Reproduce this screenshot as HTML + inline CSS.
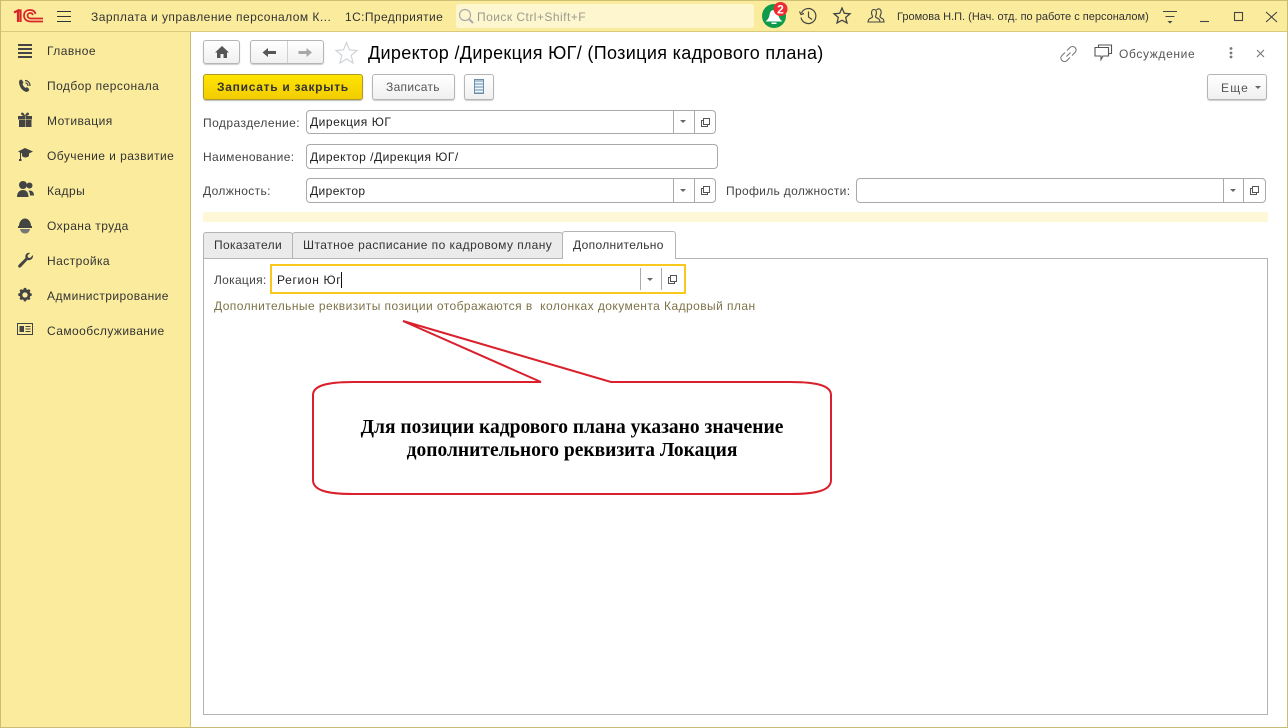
<!DOCTYPE html>
<html lang="ru"><head><meta charset="utf-8"><title>Директор</title>
<style>
html,body{margin:0;padding:0;background:#fff}
#p{position:relative;width:1288px;height:728px;overflow:hidden;background:#fff;font:12px/14px "Liberation Sans",sans-serif;color:#333}
#p div{position:absolute;box-sizing:border-box}
.t{white-space:pre;letter-spacing:.3px}
.n{color:#333;font-size:12px;letter-spacing:.44px}
.f{border:1px solid #a9a9a9;border-radius:4px;background:#fff}
.b{border:1px solid #b5b5b5;border-radius:3px;background:linear-gradient(#fff,#f0f0f0);box-shadow:0 1px 1px #ccc}
svg{position:absolute;overflow:visible}
</style></head><body><div id="p">
<div style="left:0;top:0;width:1288px;height:32px;background:#fbec9d;border-top:1px solid #cdbf73;border-bottom:1px solid #d8ca7a"></div>
<div style="left:0;top:32px;width:191px;height:696px;background:#fbec9d;border-right:1px solid #c9bc75"></div>
<div style="left:0;top:0;width:1px;height:728px;background:#c9bc75"></div>
<div style="right:0;top:0;width:1px;height:728px;background:#c9bc75"></div>
<div style="left:0;top:727px;width:1288px;height:1px;background:#c9bc75"></div>

<svg style="left:0;top:0" width="100" height="32" fill="none">
<path d="M14 12.500L18 10.500V22M18 10.500H20.500V22" stroke="#d8242b" stroke-width="2.200"/>
<path d="M43 21.500H31C26.500 21.500 24 19 24 15.500C24 12 26.500 10 30 10C33 10 35 11.500 35.500 14" stroke="#d8242b" stroke-width="1.700"/>
<path d="M43 18.500H31C29 18.500 27.500 17.500 27.500 15.500C27.500 14 29 13 30.500 13C32 13 32.500 14 33 15" stroke="#d8242b" stroke-width="1.700"/>
<path d="M57 11.500H71M57 16.500H71M57 21.500H71" stroke="#333" stroke-width="1"/>
</svg>
<div class="t" style="left:91px;top:10px;letter-spacing:.46px;color:#333">Зарплата и управление персоналом К...</div>
<div class="t" style="left:345px;top:10px;letter-spacing:.4px;color:#333">1С:Предприятие</div>

<div style="left:456px;top:4px;width:298px;height:24px;background:#fdf6cf;border-radius:3px"></div>
<svg style="left:458px;top:8px" width="18" height="18" fill="none"><circle cx="7" cy="7" r="5.500" stroke="#aaa" stroke-width="1.200"/><path d="M11 11L15 15" stroke="#aaa" stroke-width="2"/></svg>
<div class="t" style="left:477px;top:10px;color:#9b9b8c;letter-spacing:.47px">Поиск Ctrl+Shift+F</div>

<svg style="left:761px;top:2px" width="30" height="28">
<circle cx="13" cy="14" r="12" fill="#0d9a4a"/>
<path d="M13 8C10 8 9 10 8.500 13C8 16 6.500 18 4.500 19.500H21.500C19.500 18 18 16 17.500 13C17 10 16 8 13 8ZM10.500 20.500H15.500V22H10.500Z" fill="#fff"/>
<circle cx="19.500" cy="7" r="7" fill="#ee2b33"/>
<text x="19.500" y="11.500" text-anchor="middle" font-family="Liberation Sans" font-size="12" font-weight="bold" fill="#fff">2</text>
</svg>
<svg style="left:798px;top:6px" width="22" height="22" fill="none" stroke="#444" stroke-width="1.200">
<path d="M3.500 7A7.500 7.500 0 1 1 3 11.500"/><path d="M1.500 5.500L3 8.500L6 7.500"/><path d="M10.500 5.500V11L14 13.500"/></svg>
<svg style="left:833px;top:6px" width="20" height="20" fill="none" stroke="#444" stroke-width="1.300">
<path d="M9 2L11.300 7.300L17 7.800L12.700 11.500L14 17L9 14.200L4 17L5.300 11.500L1 7.800L6.700 7.300Z"/></svg>
<svg style="left:867px;top:7px" width="20" height="18" fill="none" stroke="#444" stroke-width="1.100">
<path d="M1 15C1 12 3 11.500 5 10.500C5.800 10 5.500 9 5 8C4 6 4.500 2.500 7 2.500C9.500 2.500 10 6 9 8C8.500 9 8.200 10 9 10.500C11 11.500 13 12 13 15Z"/>
<path d="M9.500 3C10.300 2 11.500 1.500 12.500 2C14.500 2.800 14.500 6 13.500 8C13 9 12.800 10 13.500 10.500C15.500 11.500 17 12 17 15H13"/></svg>
<div class="t" style="left:897px;top:10px;font-size:11px;letter-spacing:0;color:#333">Громова Н.П. (Нач. отд. по работе с персоналом)</div>
<svg style="left:1160px;top:8px" width="120" height="18" fill="none" stroke="#444" stroke-width="1.100">
<path d="M3 3.500H17M5.500 8.500H14.500"/><path d="M7.500 13H12.500L10 15.500Z" fill="#444" stroke="none"/>
<path d="M40 13.500H49"/><rect x="74.500" y="4.500" width="8" height="8"/><path d="M117 4L106 14M106 4L117 14"/>
</svg>

<svg style="left:16px;top:42px" width="20" height="300" fill="#444">
<path d="M2 2h14v2H2zM2 6h14v2H2zM2 10h14v2H2zM2 14h14v2H2z"/>
<g transform="translate(0 2)">
<path d="M3 38C3 36 5 35 6 36L7.500 38.500L6.500 40C7 41.500 8 43 9.500 44L11 43L13 45C13.500 46 13 47 11 48C6 47.500 3 42 3 38Z"/>
<path d="M9 36.500C12 36.500 14 39 14 42M9.500 39C11 39 12 40.500 12 42" fill="none" stroke="#444" stroke-width="1.200"/>
</g>
<path d="M2 74h7v3.500H2zM9.500 74h6.500v3.500H9.500zM3 78h6v7H3zM9.500 78h6v7h-6zM5 71.500c1-2 3-1 4 2.500c1-3.500 3-4.500 4-2.500c.5 1.500-2 2.500-4 2.500c-2 0-4-1-4-2.500z"/>
<g transform="translate(0 2)"><path d="M9 104L2 107.500L4 108.500V115H3V117H5.500V115H5V109L6 109.500V112C8 114 11 114 13 112V109.500L17 107.500Z"/></g>
<circle cx="7" cy="143" r="4"/><circle cx="13.500" cy="143.500" r="3"/><path d="M1 155C1 150 4 148 7 148C10 148 12.500 150 12.500 155ZM13.500 148.500C16 148.500 18 150 18 153.500H14C14 151.500 13.500 150 12.500 149Z"/>
<path d="M3 184A6 7.500 0 0 1 15 184H16V186H2V184Z"/><path d="M4 187H14C13.500 190 11.500 191.500 9 191.500C6.500 191.500 4.500 190 4 187Z" fill="#777"/>
<path d="M17 213C17.500 216 15 219 11.500 218L5 225C3 226.500 1.500 225 2.500 223L9.500 216C8.500 212.500 11.500 210 14 211L11.500 213.500L12 215.500L14 216Z"/>
<path transform="translate(9 253) scale(.75) translate(-9.500 -254.500)" fill-rule="evenodd" d="M8 245h3l.500 2 1.500.7 1.800-1 2 2-1 1.800.7 1.500 2 .5v3l-2 .5-.7 1.500 1 1.800-2 2-1.800-1-1.500.7-.5 2H8l-.5-2-1.500-.7-1.800 1-2-2 1-1.800-.7-1.500-2-.5v-3l2-.5.7-1.500-1-1.800 2-2 1.800 1 1.500-.7zM9.500 251a3.500 3.500 0 1 0 .01 0z"/>
<path fill-rule="evenodd" d="M1 281h16v12H1zM2 282v10h14v-10z"/><path d="M3.500 284h4.500v6H3.500zM9.500 284h5v1h-5zM9.500 286.500h5v1h-5zM9.500 289h5v1h-5z"/>
</svg>
<div class="t n" style="left:47px;top:44px">Главное</div>
<div class="t n" style="left:47px;top:79px">Подбор персонала</div>
<div class="t n" style="left:47px;top:114px">Мотивация</div>
<div class="t n" style="left:47px;top:149px">Обучение и развитие</div>
<div class="t n" style="left:47px;top:184px">Кадры</div>
<div class="t n" style="left:47px;top:219px">Охрана труда</div>
<div class="t n" style="left:47px;top:254px">Настройка</div>
<div class="t n" style="left:47px;top:289px">Администрирование</div>
<div class="t n" style="left:47px;top:324px">Самообслуживание</div>

<div class="b" style="left:203px;top:40px;width:37px;height:24px"></div>
<svg style="left:214px;top:45px" width="16" height="14" fill="#555"><path d="M8 1L1 7.500H3V13H6.500V9H9.500V13H13V7.500H15Z"/></svg>
<div class="b" style="left:250px;top:40px;width:74px;height:24px"></div>
<div style="left:287px;top:41px;width:1px;height:22px;background:#d0d0d0"></div>
<svg style="left:261px;top:47px" width="56" height="12"><path d="M1.500 5L7 0.500V3.500H15V6.500H7V9.500Z" fill="#555" transform="translate(0 .5)"/><path d="M51 5L45.500 0.500V3.500H37.500V6.500H45.500V9.500Z" fill="#a8a8a8" transform="translate(0 .5)"/></svg>
<svg style="left:334px;top:41px" width="26" height="24" fill="#fff" stroke="#cfd3d6" stroke-width="1.200"><path d="M12.500 1.500L15.500 8.800L23 9.500L17.200 14.400L19 22L12.500 18L6 22L7.800 14.400L2 9.500L9.500 8.800Z"/></svg>
<div class="t" style="left:368px;top:43px;font-size:18px;line-height:20px;color:#000;letter-spacing:.34px">Директор /Дирекция ЮГ/ (Позиция кадрового плана)</div>

<svg style="left:1060px;top:45px" width="18" height="18" fill="none" stroke="#777" stroke-width="1.100"><path d="M7 5.500L10 2.500C11.500 1 13.500 1 15 2.500C16.500 4 16.500 6 15 7.500L12 10.500M10.500 7.500L6.500 11.500M10 12.500L7 15.500C5.500 17 3.500 17 2 15.500C.5 14 .5 12 2 10.500L5 7.500"/></svg>
<svg style="left:1094px;top:44px" width="20" height="18" fill="#fff" stroke="#555" stroke-width="1.100"><path d="M4.500 3V1H17.500V9.500H15"/><path d="M1 3.500H14.500V12H9L7 15.500V12H1Z"/></svg>
<div class="t" style="left:1119px;top:47px;color:#555;letter-spacing:.64px">Обсуждение</div>
<svg style="left:1225px;top:45px" width="40" height="16"><circle cx="6" cy="3.500" r="1.400" fill="#777"/><circle cx="6" cy="8" r="1.400" fill="#777"/><circle cx="6" cy="12" r="1.400" fill="#777"/><path d="M32 5L39 12M39 5L32 12" stroke="#777" stroke-width="1.100"/></svg>

<div style="left:203px;top:74px;width:160px;height:26px;border:1px solid #ae9a22;border-radius:3px;background:linear-gradient(#ffe500,#f2cc00);box-shadow:0 1px 1px #bbb"></div>
<div class="t" style="left:217px;top:80px;font-weight:bold;color:#333;font-size:12px;letter-spacing:.72px">Записать и закрыть</div>
<div class="b" style="left:372px;top:74px;width:83px;height:26px"></div>
<div class="t" style="left:386px;top:80px;color:#555;letter-spacing:.32px">Записать</div>
<div class="b" style="left:464px;top:74px;width:30px;height:26px"></div>
<svg style="left:474px;top:79px" width="10" height="16"><rect x=".5" y=".5" width="9" height="14" fill="#a8c3d8" stroke="#6c8fa9"/><path d="M1 3.500h8M1 6.500h8M1 9.500h8M1 12.500h8" stroke="#f2f6f9"/></svg>
<div class="b" style="left:1207px;top:74px;width:60px;height:26px"></div>
<div class="t" style="left:1221px;top:81px;color:#555;letter-spacing:1.200px">Еще</div>
<svg style="left:1255px;top:86px" width="7" height="4"><path d="M0 0H6L3 3Z" fill="#666"/></svg>

<div class="t" style="left:203px;top:116px;color:#444;letter-spacing:.45px">Подразделение:</div>
<div class="f" style="left:306px;top:110px;width:410px;height:24px"></div>
<div style="left:673px;top:111px;width:1px;height:22px;background:#a9a9a9"></div>
<div style="left:694px;top:111px;width:1px;height:22px;background:#a9a9a9"></div>
<div class="t" style="left:310px;top:115px;color:#222;letter-spacing:.54px">Дирекция ЮГ</div>

<div class="t" style="left:203px;top:150px;color:#444;letter-spacing:.38px">Наименование:</div>
<div class="f" style="left:306px;top:144px;width:412px;height:25px"></div>
<div class="t" style="left:310px;top:150px;color:#222;letter-spacing:.5px">Директор /Дирекция ЮГ/</div>

<div class="t" style="left:203px;top:184px;color:#444;letter-spacing:.38px">Должность:</div>
<div class="f" style="left:306px;top:178px;width:410px;height:25px"></div>
<div style="left:673px;top:179px;width:1px;height:23px;background:#a9a9a9"></div>
<div style="left:694px;top:179px;width:1px;height:23px;background:#a9a9a9"></div>
<div class="t" style="left:310px;top:184px;color:#222;letter-spacing:.4px">Директор</div>

<div class="t" style="left:726px;top:184px;color:#444;letter-spacing:.33px">Профиль должности:</div>
<div class="f" style="left:856px;top:178px;width:410px;height:25px"></div>
<div style="left:1223px;top:179px;width:1px;height:23px;background:#a9a9a9"></div>
<div style="left:1243px;top:179px;width:1px;height:23px;background:#a9a9a9"></div>

<svg style="left:680px;top:120px" width="8" height="4"><path d="M0 0H6L3 3Z" fill="#666"/></svg>
<svg style="left:680px;top:189px" width="8" height="4"><path d="M0 0H6L3 3Z" fill="#666"/></svg>
<svg style="left:1230px;top:189px" width="8" height="4"><path d="M0 0H6L3 3Z" fill="#666"/></svg>
<svg style="left:701px;top:118px" width="9" height="9" fill="#fff" stroke="#555"><path d="M2.500 2.500H.5V8.500H6.500V6.500"/><rect x="2.500" y=".5" width="6" height="6"/></svg>
<svg style="left:701px;top:186px" width="9" height="9" fill="#fff" stroke="#555"><path d="M2.500 2.500H.5V8.500H6.500V6.500"/><rect x="2.500" y=".5" width="6" height="6"/></svg>
<svg style="left:1250px;top:186px" width="9" height="9" fill="#fff" stroke="#555"><path d="M2.500 2.500H.5V8.500H6.500V6.500"/><rect x="2.500" y=".5" width="6" height="6"/></svg>

<div style="left:203px;top:212px;width:1065px;height:10px;background:#fef8d8"></div>

<div style="left:203px;top:258px;width:1065px;height:457px;border:1px solid #b4b4b4;background:#fff"></div>
<div style="left:203px;top:232px;width:90px;height:27px;background:#ebebeb;border:1px solid #b4b4b4;border-radius:3px 3px 0 0"></div>
<div style="left:292px;top:232px;width:271px;height:27px;background:#ebebeb;border:1px solid #b4b4b4;border-radius:3px 3px 0 0"></div>
<div style="left:562px;top:231px;width:114px;height:28px;background:#fff;border:1px solid #b4b4b4;border-bottom:0;border-radius:3px 3px 0 0"></div>
<div class="t" style="left:214px;top:238px;color:#333;letter-spacing:.34px">Показатели</div>
<div class="t" style="left:303px;top:238px;color:#333;letter-spacing:.45px">Штатное расписание по кадровому плану</div>
<div class="t" style="left:573px;top:238px;color:#333;letter-spacing:.34px">Дополнительно</div>

<div class="t" style="left:214px;top:273px;color:#444;letter-spacing:.3px">Локация:</div>
<div style="left:270px;top:264px;width:416px;height:30px;border:2px solid #f8c81c;background:#fff"></div>
<div style="left:640px;top:268px;width:1px;height:22px;background:#aaa"></div>
<div style="left:661px;top:268px;width:1px;height:22px;background:#aaa"></div>
<div class="t" style="left:277px;top:273px;color:#222;letter-spacing:.66px">Регион Юг</div>
<div style="left:341px;top:272px;width:1px;height:16px;background:#111"></div>
<svg style="left:647px;top:278px" width="8" height="4"><path d="M0 0H6L3 3Z" fill="#666"/></svg>
<svg style="left:668px;top:275px" width="9" height="9" fill="#fff" stroke="#555"><path d="M2.500 2.500H.5V8.500H6.500V6.500"/><rect x="2.500" y=".5" width="6" height="6"/></svg>
<div class="t" style="left:214px;top:299px;color:#7d7348;letter-spacing:.435px">Дополнительные реквизиты позиции отображаются в  колонках документа Кадровый план</div>

<svg style="left:300px;top:315px" width="540" height="190" fill="none">
<path d="M241 67L103 6L311 67H490C518 67 531 71 531 80V165C531 175 518 179 490 179H53C26 179 13 175 13 165V80C13 71 26 67 53 67Z" stroke="#d9202c" stroke-width="2" stroke-linejoin="miter"/>
</svg>
<div style="left:320px;top:416px;width:504px;text-align:center;font:bold 19.500px/23px 'Liberation Serif',serif;color:#000;white-space:nowrap">Для позиции кадрового плана указано значение<br>дополнительного реквизита Локация</div>
</div></body></html>
